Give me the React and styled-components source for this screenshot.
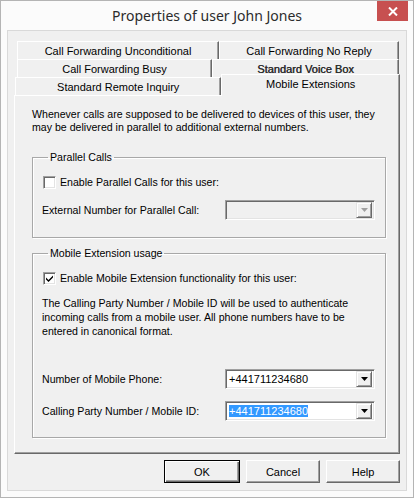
import React from "react";
import styled, { createGlobalStyle } from "styled-components";

const Global = createGlobalStyle`
  html, body {
    margin: 0;
    padding: 0;
    background: #ffffff;
  }
  * {
    box-sizing: border-box;
  }
`;

const Window = styled.div`
  width: 414px;
  height: 498px;
  border: 1px solid #b4b4b4;
  background: #fbfbfb;
  display: flex;
  flex-direction: column;
  font-family: "Liberation Sans", Arial, sans-serif;
  font-size: 10.6px;
  color: #000;
`;

const TitleBar = styled.div`
  height: 29px;
  display: grid;
  grid-template-columns: 1fr auto 1fr;
  align-items: start;
`;

const Title = styled.div`
  grid-column: 2;
  margin-top: 5px;
  font-family: "Noto Sans", "Open Sans", sans-serif;
  font-size: 14px;
  color: #2b2b2b;
  white-space: nowrap;
`;

const CloseButton = styled.div`
  grid-column: 3;
  justify-self: end;
  width: 31px;
  height: 20px;
  margin-right: 5px;
  background: #c75050;
  display: flex;
  align-items: center;
  justify-content: center;
`;

const Client = styled.div`
  flex: 1;
  margin: 0 6px 6px;
  border: 1px solid #d9d9d9;
  background: #f0f0f0;
  padding: 10px 0 0 6px;
  display: flex;
  flex-direction: column;
`;

const TabStrip = styled.div`
  width: 386px;
  display: flex;
  flex-direction: column;
`;

const TabRow = styled.div`
  height: 18px;
  display: flex;
  align-items: flex-end;
  padding-left: ${p => p.indent}px;
`;

const Tab = styled.div`
  width: ${p => p.w}px;
  height: ${p => (p.active ? 22 : 18)}px;
  margin-bottom: ${p => (p.active ? -1 : 0)}px;
  position: ${p => (p.active ? "relative" : "static")};
  z-index: ${p => (p.active ? 2 : "auto")};
  background: #f0f0f0;
  border-top: 1px solid #ffffff;
  border-left: 1px solid #ffffff;
  border-right: 1px solid #696969;
  box-shadow: inset -1px 0 0 #a0a0a0;
  display: flex;
  justify-content: center;
  align-items: ${p => (p.active ? "flex-start" : "center")};
  padding-top: ${p => (p.active ? 3 : 0)}px;
  white-space: nowrap;
  font-size: 11px;
  color: ${p => (p.strong ? "#2e2e2e" : "#000")};
  text-shadow: ${p => (p.strong ? "0.4px 0 0 #2e2e2e" : "none")};
`;

const Panel = styled.div`
  height: 359px;
  border-top: 1px solid #ffffff;
  border-left: 1px solid #ffffff;
  border-right: 1px solid #696969;
  border-bottom: 1px solid #696969;
  box-shadow: inset -1px -1px 0 #a0a0a0;
  padding: 12px 13px 0 17px;
  display: flex;
  flex-direction: column;
`;

const Para = styled.p`
  margin: ${p => p.top || 0}px 0 0;
  line-height: ${p => p.lh || 13}px;
  white-space: nowrap;
`;

const Group = styled.fieldset`
  margin: ${p => p.top}px 0 0;
  padding: ${p => p.pt}px 8px ${p => p.pb}px 9px;
  border: 1px solid #a8a8a8;
  box-shadow: 1px 1px 0 #ffffff, inset 1px 1px 0 #ffffff;
  min-width: 0;
  display: flex;
  flex-direction: column;
`;

const Legend = styled.legend`
  margin-left: 6px;
  padding: 0 2px;
  line-height: 13px;
`;

const CheckRow = styled.label`
  height: 16px;
  display: flex;
  align-items: center;
  gap: 4px;
  margin-left: 1px;
`;

const CheckBox = styled.span`
  width: 13px;
  height: 13px;
  background: #ffffff;
  border-top: 1px solid #a0a0a0;
  border-left: 1px solid #a0a0a0;
  border-right: 1px solid #ffffff;
  border-bottom: 1px solid #ffffff;
  box-shadow: inset 1px 1px 0 #696969, inset -1px -1px 0 #e3e3e3;
  display: flex;
  align-items: center;
  justify-content: center;
`;

const FieldRow = styled.div`
  height: 20px;
  margin-top: ${p => p.top}px;
  display: grid;
  grid-template-columns: 183px 150px;
  align-items: center;
`;

const Combo = styled.div`
  height: 20px;
  background: ${p => (p.disabled ? "#f0f0f0" : "#ffffff")};
  border-top: 1px solid #a0a0a0;
  border-left: 1px solid #a0a0a0;
  border-right: 1px solid #ffffff;
  border-bottom: 1px solid #ffffff;
  box-shadow: inset 1px 1px 0 #696969, inset -1px -1px 0 #e3e3e3;
  padding: 2px;
  display: flex;
  align-items: center;
`;

const ComboText = styled.span`
  flex: 1;
  padding-left: 1px;
  font-size: 11px;
  line-height: 14px;
`;

const Selected = styled.span`
  background: #3399ff;
  color: #ffffff;
`;

const DropButton = styled.span`
  width: 16px;
  height: 16px;
  background: #f0f0f0;
  border-top: 1px solid #e3e3e3;
  border-left: 1px solid #e3e3e3;
  border-right: 1px solid #696969;
  border-bottom: 1px solid #696969;
  box-shadow: inset 1px 1px 0 #ffffff, inset -1px -1px 0 #a0a0a0;
  display: flex;
  align-items: center;
  justify-content: center;
`;

const ButtonBar = styled.div`
  width: 386px;
  display: flex;
  justify-content: flex-end;
  gap: 6px;
  margin-top: 6px;
`;

const Button = styled.button`
  width: ${p => (p.primary ? 76 : 74)}px;
  height: 23px;
  font-family: "Liberation Sans", Arial, sans-serif;
  font-size: 11px;
  color: #000;
  background: #f0f0f0;
  border-top: 1px solid ${p => (p.primary ? "#000" : "#ffffff")};
  border-left: 1px solid ${p => (p.primary ? "#000" : "#ffffff")};
  border-right: 1px solid ${p => (p.primary ? "#000" : "#696969")};
  border-bottom: 1px solid ${p => (p.primary ? "#000" : "#696969")};
  box-shadow: ${p =>
    p.primary
      ? "inset 1px 1px 0 #ffffff, inset -1px -1px 0 #696969, inset -2px -2px 0 #a0a0a0"
      : "inset -1px -1px 0 #a0a0a0"};
  padding: 0;
`;

const Arrow = ({ disabled }) => (
  <svg width="7" height="4" viewBox="0 0 7 4">
    <path d="M0 0h7L3.5 4z" fill={disabled ? "#a0a0a0" : "#000"} />
  </svg>
);

const Check = () => (
  <svg width="9" height="9" viewBox="0 0 9 9">
    <path d="M1 3.5l2.5 2.5L8 1.5v2L3.5 8 1 5.5z" fill="#000" />
  </svg>
);

export default function App() {
  return (
    <>
      <Global />
      <Window>
        <TitleBar>
          <Title>Properties of user John Jones</Title>
          <CloseButton>
            <svg width="10" height="9" viewBox="0 0 10 9">
              <path d="M1 0.5l8 8M9 0.5l-8 8" stroke="#fff" strokeWidth="2" />
            </svg>
          </CloseButton>
        </TitleBar>
        <Client>
          <TabStrip>
            <TabRow indent={3}>
              <Tab w={202}>Call Forwarding Unconditional</Tab>
              <Tab w={180}>Call Forwarding No Reply</Tab>
            </TabRow>
            <TabRow indent={3}>
              <Tab w={195}>Call Forwarding Busy</Tab>
              <Tab w={187} strong>Standard Voice Box</Tab>
            </TabRow>
            <TabRow indent={1}>
              <Tab w={207}>Standard Remote Inquiry</Tab>
              <Tab w={179} active>Mobile Extensions</Tab>
            </TabRow>
            <Panel>
              <Para>
                Whenever calls are supposed to be delivered to devices of this user, they
                <br />
                may be delivered in parallel to additional external numbers.
              </Para>
              <Group top={17} pt={10} pb={17}>
                <Legend>Parallel Calls</Legend>
                <CheckRow>
                  <CheckBox />
                  Enable Parallel Calls for this user:
                </CheckRow>
                <FieldRow top={10}>
                  <span>External Number for Parallel Call:</span>
                  <Combo disabled>
                    <ComboText />
                    <DropButton>
                      <Arrow disabled />
                    </DropButton>
                  </Combo>
                </FieldRow>
              </Group>
              <Group top={9} pt={10} pb={16}>
                <Legend>Mobile Extension usage</Legend>
                <CheckRow>
                  <CheckBox>
                    <Check />
                  </CheckBox>
                  Enable Mobile Extension functionality for this user:
                </CheckRow>
                <Para lh={14} top={10}>
                  The Calling Party Number / Mobile ID will be used to authenticate
                  <br />
                  incoming calls from a mobile user. All phone numbers have to be
                  <br />
                  entered in canonical format.
                </Para>
                <FieldRow top={31}>
                  <span>Number of Mobile Phone:</span>
                  <Combo>
                    <ComboText>+441711234680</ComboText>
                    <DropButton>
                      <Arrow />
                    </DropButton>
                  </Combo>
                </FieldRow>
                <FieldRow top={12}>
                  <span>Calling Party Number / Mobile ID:</span>
                  <Combo>
                    <ComboText>
                      <Selected>+441711234680</Selected>
                    </ComboText>
                    <DropButton>
                      <Arrow />
                    </DropButton>
                  </Combo>
                </FieldRow>
              </Group>
            </Panel>
          </TabStrip>
          <ButtonBar>
            <Button primary>OK</Button>
            <Button>Cancel</Button>
            <Button>Help</Button>
          </ButtonBar>
        </Client>
      </Window>
    </>
  );
}
